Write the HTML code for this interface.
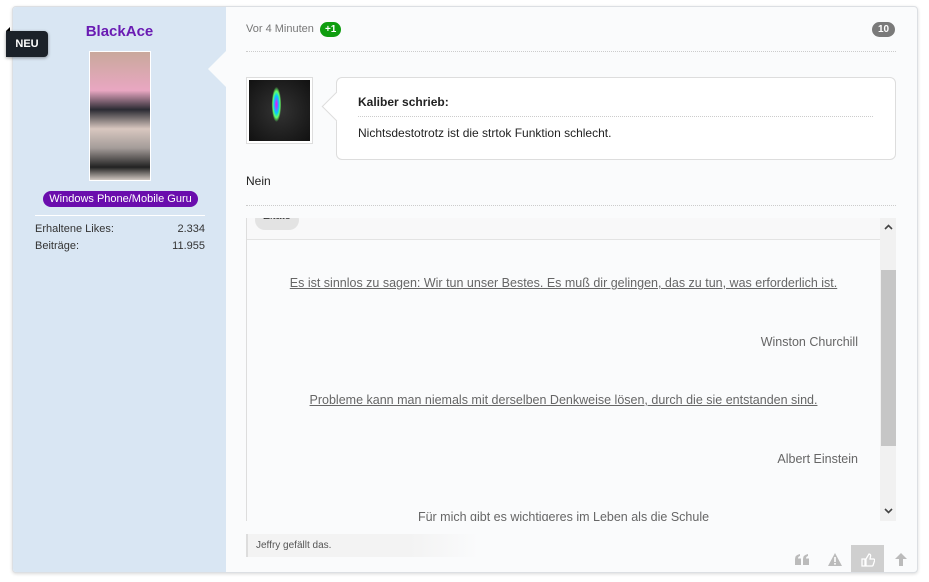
<!DOCTYPE html>
<html><head><meta charset="utf-8"><style>
*{box-sizing:border-box;margin:0;padding:0}
body{width:929px;height:582px;background:#fff;font-family:"Liberation Sans",sans-serif;position:relative;overflow:hidden}
.card{position:absolute;left:12px;top:6px;width:906px;height:567px;background:#fafbfc;border:1px solid #dcdfe3;border-radius:4px;box-shadow:0 1px 3px rgba(0,0,0,.15);overflow:hidden}
.side{position:absolute;left:0;top:0;width:213px;height:567px;background:#d9e6f3}
.arrow{position:absolute;left:195px;top:44px;width:0;height:0;border-top:18px solid transparent;border-bottom:18px solid transparent;border-right:18px solid #fafbfc}
.name{position:absolute;left:0;width:213px;top:16px;text-align:center;color:#6a1bb3;font-weight:bold;font-size:15px}
.photo{position:absolute;left:76px;top:44px;width:62px;height:130px;border:1px solid #fff;background:linear-gradient(180deg,#c9a89b 0%,#e9a7c2 30%,#2b2b33 45%,#d8c7bf 60%,#a49c99 75%,#222 90%,#cfc6c0 100%)}
.badge{position:absolute;left:30px;top:184px;width:155px;height:16px;background:#6a0dad;color:#fff;border-radius:8px;font-size:11px;text-align:center;line-height:16px}
.hr{position:absolute;left:22px;width:170px;top:208px;border-top:1px solid #fff}
.stat{position:absolute;left:22px;width:170px;font-size:11px;color:#333;display:flex;justify-content:space-between}
.neu{position:absolute;left:6px;top:31px;width:42px;height:26px;background:#1b2129;color:#fff;font-size:11px;font-weight:bold;line-height:26px;text-align:center;border-radius:0 4px 4px 0;box-shadow:0 1px 3px rgba(0,0,0,.4);z-index:5}
.neu:before{content:"";position:absolute;left:0;top:-4px;border-bottom:4px solid #000;border-left:4px solid transparent}
.main{position:absolute;left:233px;top:0;right:0}
.time{position:absolute;left:0;top:15px;font-size:11px;color:#777}
.plus{display:inline-block;background:#0f9d0f;color:#fff;font-size:10px;font-weight:bold;border-radius:8px;padding:0 5px;height:15px;line-height:15px;margin-left:3px}
.ten{position:absolute;right:22px;top:15px;background:#7a7a7a;color:#fff;font-size:10px;font-weight:bold;border-radius:8px;width:23px;height:15px;line-height:15px;text-align:center}
.dot{position:absolute;left:0;width:650px;border-top:1px dotted #ccc}
.ava{position:absolute;left:0;top:70px;width:67px;height:67px;border:1px solid #ddd;background:#fff;padding:2px}
.ava div{width:100%;height:100%;background:radial-gradient(ellipse 6px 22px at 45% 40%,#f0f 0%,#0cf 40%,#6f6 60%,transparent 80%),radial-gradient(circle at 50% 50%,#333,#111)}
.quote{position:absolute;left:90px;top:70px;width:560px;height:83px;background:#fff;border:1px solid #ddd;border-radius:6px}
.quote:before{content:"";position:absolute;left:-11px;top:18px;width:20px;height:20px;background:#fff;border-left:1px solid #ddd;border-bottom:1px solid #ddd;transform:rotate(45deg)}
.qh{position:absolute;left:21px;top:17px;font-size:12px;font-weight:bold;color:#222}
.ql{position:absolute;left:21px;right:22px;top:38px;border-top:1px dotted #ccc}
.qt{position:absolute;left:21px;top:48px;font-size:12px;color:#222}
.nein{position:absolute;left:0;top:167px;font-size:12px;color:#222}
.box{position:absolute;left:0;top:211px;width:650px;height:303px;border-left:1px solid #ddd;overflow:hidden}
.bh{position:absolute;left:0;top:0;width:633px;height:22px;border-bottom:1px solid #e3e3e3;background:#f8f8f9}
.pill{position:absolute;left:8px;top:-8px;width:44px;height:20px;background:#e3e3e3;border-radius:10px;font-size:11px;color:#333;text-align:center;line-height:12px}
.sb{position:absolute;left:633px;top:0;width:17px;height:303px;background:#f1f1f1}
.thumb{position:absolute;left:1px;top:52px;width:15px;height:176px;background:#c6c6c6}
.c{position:absolute;left:0;width:633px;text-align:center;font-size:12.5px;color:#666}
.c u{text-decoration:underline}
.r{position:absolute;right:38px;font-size:12.5px;color:#666;text-align:right}
.likes{position:absolute;left:0;top:527px;width:233px;height:23px;background:linear-gradient(90deg,#f3f3f3 70%,#fafbfc);border-left:2px solid #ddd;font-size:10px;color:#555;line-height:23px;padding-left:8px}
.btns{position:absolute;right:0;top:538px;height:29px;display:flex}
.btns div{width:33px;height:29px;display:flex;align-items:center;justify-content:center}
</style></head><body>
<div class="neu">NEU</div>
<div class="card">
 <div class="side">
  <div class="name">BlackAce</div>
  <div class="photo"></div>
  <div class="badge">Windows Phone/Mobile Guru</div>
  <div class="hr"></div>
  <div class="stat" style="top:216px"><span>Erhaltene Likes:</span><span>2.334</span></div>
  <div class="stat" style="top:233px"><span>Beiträge:</span><span>11.955</span></div>
  <div class="arrow"></div>
 </div>
 <div class="main">
  <div class="time">Vor 4 Minuten <span class="plus">+1</span></div>
  <div class="ten">10</div>
  <div class="dot" style="top:44px"></div>
  <div class="ava"><div></div></div>
  <div class="quote"><div class="qh">Kaliber schrieb:</div><div class="ql"></div><div class="qt">Nichtsdestotrotz ist die strtok Funktion schlecht.</div></div>
  <div class="nein">Nein</div>
  <div class="dot" style="top:198px"></div>
  <div class="box">
   <div class="bh"><div class="pill">Zitate</div></div>
   <div class="c" style="top:58px"><u>Es ist sinnlos zu sagen: Wir tun unser Bestes. Es muß dir gelingen, das zu tun, was erforderlich ist.</u></div>
   <div class="r" style="top:117px">Winston Churchill</div>
   <div class="c" style="top:175px"><u>Probleme kann man niemals mit derselben Denkweise lösen, durch die sie entstanden sind.</u></div>
   <div class="r" style="top:234px">Albert Einstein</div>
   <div class="c" style="top:292px">Für mich gibt es wichtigeres im Leben als die Schule</div>
   <div class="sb">
    <svg style="position:absolute;left:4px;top:6px" width="9" height="6" viewBox="0 0 9 6"><path d="M1 5L4.5 1.5L8 5" stroke="#444" stroke-width="1.6" fill="none"/></svg>
    <div class="thumb"></div>
    <svg style="position:absolute;left:4px;top:290px" width="9" height="6" viewBox="0 0 9 6"><path d="M1 1L4.5 4.5L8 1" stroke="#444" stroke-width="1.6" fill="none"/></svg>
   </div>
  </div>
  <div class="likes">Jeffry gefällt das.</div>
 </div>
 <div class="btns">
  <div><svg width="14" height="11" viewBox="0 0 14 11"><path d="M0 5Q0 1 5 0V2Q3 2.5 3 4.5H6V11H0ZM8 5Q8 1 13 0V2Q11 2.5 11 4.5H14V11H8Z" fill="#bbb"/></svg></div>
  <div><svg width="14" height="13" viewBox="0 0 14 13"><path d="M7 0L14 13H0Z" fill="#bbb"/><rect x="6.2" y="4" width="1.6" height="5" fill="#fff"/><rect x="6.2" y="10" width="1.6" height="1.6" fill="#fff"/></svg></div>
  <div style="background:#cfcfcf"><svg width="14" height="14" viewBox="0 0 14 14"><path d="M1 6h3v7H1zM5 6l3-5c1 0 2 1 1.5 2.5L9 6h3.5c1 0 1.5 1 1 2l-1.5 4.5c-.3.5-.7.5-1 .5H5z" fill="none" stroke="#fff" stroke-width="1.3"/></svg></div>
  <div><svg width="12" height="13" viewBox="0 0 12 13"><path d="M6 0L12 6H8V13H4V6H0Z" fill="#bbb"/></svg></div>
 </div>
</div>
</body></html>
